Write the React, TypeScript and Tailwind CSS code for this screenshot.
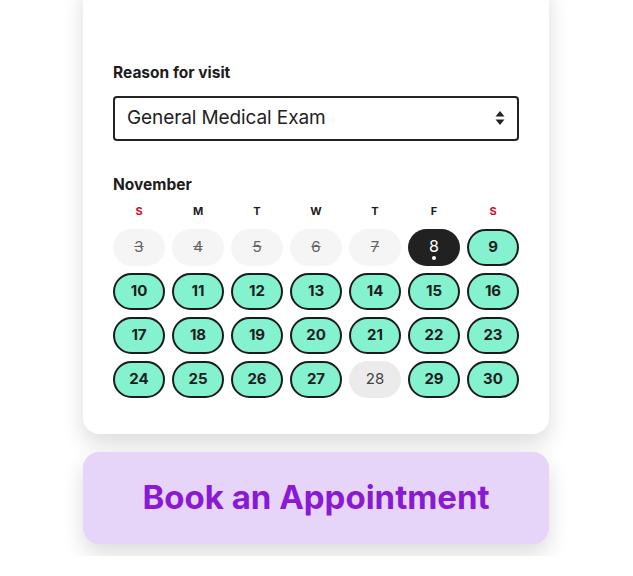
import React from 'react';

type Day = { n: number; state: 'past' | 'today' | 'open' | 'full' };

const days: Day[] = [
  ...[3, 4, 5, 6, 7].map((n) => ({ n, state: 'past' as const })),
  { n: 8, state: 'today' },
  ...Array.from({ length: 19 }, (_, i) => ({ n: i + 9, state: 'open' as const })),
  { n: 28, state: 'full' },
  { n: 29, state: 'open' },
  { n: 30, state: 'open' },
];

const weekdays = ['S', 'M', 'T', 'W', 'T', 'F', 'S'];

const DayCell = ({ day }: { day: Day }) => {
  if (day.state === 'past') {
    return (
      <div className="h-[37px] rounded-full bg-[#f5f5f5] flex items-center justify-center text-[15px] text-[#666] line-through">
        {day.n}
      </div>
    );
  }
  if (day.state === 'today') {
    return (
      <div className="relative h-[37px] rounded-full bg-[#212121] flex items-center justify-center text-[16px] text-white">
        <span className="-mt-[4px]">{day.n}</span>
        <span className="absolute bottom-[6px] left-1/2 -translate-x-1/2 w-[4px] h-[4px] rounded-full bg-white" />
      </div>
    );
  }
  if (day.state === 'full') {
    return (
      <div className="h-[37px] rounded-full bg-[#ebebeb] flex items-center justify-center text-[15px] text-[#444]">
        {day.n}
      </div>
    );
  }
  return (
    <div className="h-[37px] rounded-full bg-[#84f2cf] border-[2.5px] border-[#1c1c1c] flex items-center justify-center text-[15px] font-bold text-[#1c1c1c]">
      {day.n}
    </div>
  );
};

export default function App() {
  return (
    <div className="min-h-[576px] bg-white font-['Inter',sans-serif]">
      <div className="w-[466px] ml-[83px] -mt-[20px] pt-[85px] pb-[36px] px-[30px] bg-white rounded-2xl shadow-[0_10px_22px_rgba(0,0,0,0.14)]">
        <p className="text-[15.5px] font-bold text-[#1c1c1c] leading-none">Reason for visit</p>
        <div className="mt-[15px] h-[45px] border-2 border-[#222] rounded-[4px] flex items-center justify-between pl-[12px] pr-[12px]">
          <span className="text-[19px] text-[#222] tracking-[-0.1px]">General Medical Exam</span>
          <svg width="10" height="16" viewBox="0 0 10 16" fill="#222">
            <path d="M5 1 L9.5 6.5 H0.5 Z" />
            <path d="M5 15 L9.5 9.5 H0.5 Z" />
          </svg>
        </div>

        <p className="mt-[36px] text-[15.5px] font-bold text-[#1c1c1c] leading-none">November</p>
        <div className="mt-[14px] grid grid-cols-7 gap-x-[7px]">
          {weekdays.map((w, i) => (
            <div
              key={i}
              className={`text-center text-[11px] font-bold leading-none ${i === 0 || i === 6 ? 'text-[#c8102e]' : 'text-[#1c1c1c]'}`}
            >
              {w}
            </div>
          ))}
        </div>
        <div className="mt-[12px] grid grid-cols-7 gap-x-[7px] gap-y-[7px]">
          {days.map((d) => (
            <DayCell key={d.n} day={d} />
          ))}
        </div>
      </div>

      <button className="mt-[18px] ml-[83px] w-[466px] h-[92px] rounded-2xl bg-[#e6d5f9] shadow-[0_10px_22px_rgba(0,0,0,0.14)] flex items-center justify-center text-[33px] font-bold text-[#8a19d4]">
        Book an Appointment
      </button>
    </div>
  );
}
